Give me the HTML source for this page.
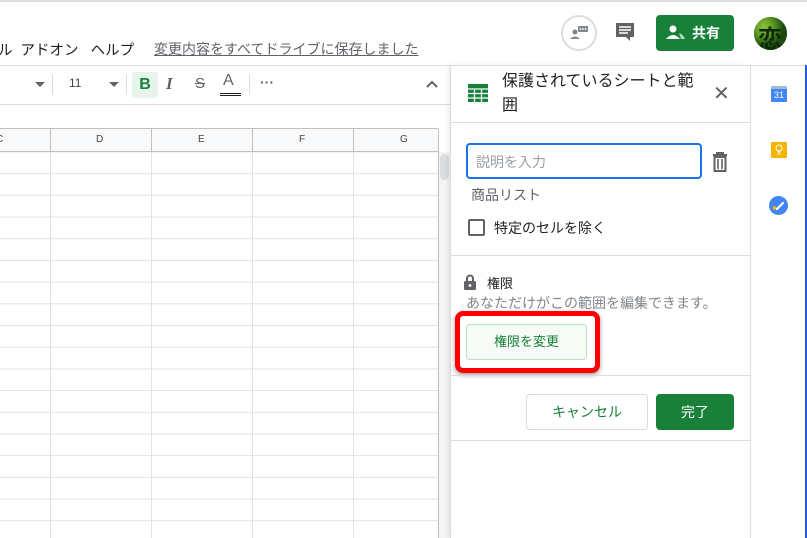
<!DOCTYPE html><html><head><meta charset="utf-8"><style>
*{box-sizing:border-box;margin:0;padding:0}
body{width:807px;height:538px;overflow:hidden;background:#fff;position:relative;font-family:"Liberation Sans","Noto Sans CJK JP",sans-serif;color:#202124}
.a{position:absolute}
</style></head><body>
<div class="a" style="left:0;top:0;width:807px;height:2px;background:#dadce0"></div>
<div class="a" style="left:-2px;top:39px;font-size:14.5px;color:#202124;white-space:nowrap">ル&nbsp;&nbsp;アドオン&nbsp;&nbsp;&nbsp;ヘルプ</div>
<div class="a" style="left:154px;top:39px;font-size:14px;color:#5f6368;text-decoration:underline">変更内容をすべてドライブに保存しました</div>
<!-- top right -->
<div class="a" style="left:561px;top:15px;width:36px;height:36px;border:2px solid #dadce0;border-radius:50%"></div>
<svg class="a" style="left:568px;top:24px" width="22" height="16"><circle cx="7" cy="8" r="2.5" fill="#80868b"/><path d="M2 15q5-5 10 0z" fill="#80868b"/><rect x="10" y="2" width="10" height="6" rx="1" fill="#80868b"/><circle cx="12.5" cy="5" r=".9" fill="#fff"/><circle cx="15" cy="5" r=".9" fill="#fff"/><circle cx="17.5" cy="5" r=".9" fill="#fff"/></svg>
<svg class="a" style="left:615px;top:22px" width="20" height="22"><path d="M1 1h18v14h-4v4l-4-4H1z" fill="#5f6368"/><path d="M4 5h12M4 8h12M4 11h9" stroke="#fff" stroke-width="1.6"/></svg>
<div class="a" style="left:656px;top:15px;width:78px;height:36px;background:#188038;border-radius:4px;color:#fff;font-size:14px;font-weight:bold;line-height:36px;padding-left:36px">共有</div>
<svg class="a" style="left:666px;top:24px" width="20" height="16"><circle cx="7" cy="5" r="3.5" fill="#fff"/><path d="M0 15q7-8 14 0z" fill="#fff"/><path d="M13 9q4 1 6 6h-4z" fill="#a8dab5"/></svg>
<div class="a" style="left:754px;top:17px;width:33px;height:33px;border-radius:50%;background:#1e5a1a;overflow:hidden"><div style="position:absolute;left:0;top:0;width:33px;height:33px;background:radial-gradient(circle at 30% 30%,#8fc13a 0,#5a9a20 30%,#1e4a12 60%)"></div><div style="position:absolute;left:4px;top:2px;font-size:24px;color:#0d2a0a;font-weight:bold">恋</div></div>
<!-- toolbar -->
<div class="a" style="left:0;top:65px;width:450px;height:1px;background:#dadce0"></div>
<div class="a" style="left:0;top:104px;width:450px;height:1px;background:#dadce0"></div>
<div class="a" style="left:35px;top:82px;border:5px solid transparent;border-top-color:#5f6368;border-bottom:0"></div>
<div class="a" style="left:52px;top:75px;width:1px;height:20px;background:#dadce0"></div>
<div class="a" style="left:69px;top:76px;font-size:12px;color:#444">11</div>
<div class="a" style="left:109px;top:82px;border:5px solid transparent;border-top-color:#5f6368;border-bottom:0"></div>
<div class="a" style="left:126px;top:75px;width:1px;height:20px;background:#dadce0"></div>
<div class="a" style="left:132px;top:72px;width:26px;height:26px;background:#e6f4ea;border-radius:3px;color:#188038;font-weight:bold;font-size:16px;text-align:center;line-height:26px">B</div>
<div class="a" style="left:166px;top:74px;font-size:17px;font-style:italic;font-weight:bold;color:#5f6368;font-family:'Liberation Serif',serif">I</div>
<div class="a" style="left:195px;top:75px;font-size:15px;color:#5f6368;text-decoration:line-through">S</div>
<div class="a" style="left:223px;top:72px;font-size:16px;color:#5f6368">A</div>
<div class="a" style="left:220px;top:93px;width:21px;height:3px;border-top:1px solid #222;border-bottom:1px solid #222"></div>
<div class="a" style="left:249px;top:75px;width:1px;height:20px;background:#dadce0"></div>
<div class="a" style="left:260px;top:74px;font-size:14px;color:#5f6368;font-weight:bold">···</div>
<svg class="a" style="left:426px;top:80px" width="12" height="8"><path d="M1 7l5-5 5 5" stroke="#5f6368" stroke-width="2" fill="none"/></svg>
<!-- grid -->
<div class="a" style="left:0;top:128px;width:438px;height:24px;background:#f8f9fa;border-top:1px solid #c0c0c0;border-bottom:1px solid #c0c0c0"></div>
<div class="a" style="left:0;top:152px;width:438px;height:386px;background-image:linear-gradient(#e2e2e2 1px,transparent 1px);background-size:100% 21.7px;background-position:0 -0.5px"></div>
<div class="a" style="left:50px;top:129px;width:1px;height:409px;background:#e2e2e2"></div>
<div class="a" style="left:151px;top:129px;width:1px;height:409px;background:#e2e2e2"></div>
<div class="a" style="left:252px;top:129px;width:1px;height:409px;background:#e2e2e2"></div>
<div class="a" style="left:353px;top:129px;width:1px;height:409px;background:#e2e2e2"></div>
<div class="a" style="left:438px;top:129px;width:1px;height:409px;background:#c0c0c0"></div>
<div class="a" style="left:50px;top:129px;width:1px;height:23px;background:#c0c0c0"></div>
<div class="a" style="left:151px;top:129px;width:1px;height:23px;background:#c0c0c0"></div>
<div class="a" style="left:252px;top:129px;width:1px;height:23px;background:#c0c0c0"></div>
<div class="a" style="left:353px;top:129px;width:1px;height:23px;background:#c0c0c0"></div>
<div class="a" style="left:-4px;top:134px;font-size:10px;color:#444">C</div>
<div class="a" style="left:96px;top:134px;font-size:10px;color:#444">D</div>
<div class="a" style="left:198px;top:134px;font-size:10px;color:#444">E</div>
<div class="a" style="left:299px;top:134px;font-size:10px;color:#444">F</div>
<div class="a" style="left:400px;top:134px;font-size:10px;color:#444">G</div>
<div class="a" style="left:439px;top:152px;width:11px;height:386px;background:#f4f4f4"></div>
<div class="a" style="left:440px;top:154px;width:9px;height:26px;background:#dadce0;border-radius:5px"></div>
<!-- panel -->
<div class="a" style="left:450px;top:65px;width:300px;height:473px;background:#fff;border-left:1px solid #dadce0;box-shadow:-2px 0 4px rgba(0,0,0,.08)"></div>
<div class="a" style="left:450px;top:65px;width:357px;height:1px;background:#dadce0"></div>
<svg class="a" style="left:468px;top:84px" width="20" height="18"><rect x="0" y="0" width="20" height="18" fill="#188038"/><path d="M0 5h20M0 9.5h20M0 14h20M6.5 5v13M13.5 5v13" stroke="#fff" stroke-width="1.3"/></svg>
<div class="a" style="left:502px;top:70px;width:200px;font-size:16px;line-height:24px;color:#202124">保護されているシートと範囲</div>
<div class="a" style="left:713px;top:82px;font-size:20px;color:#5f6368;line-height:24px">✕</div>
<div class="a" style="left:450px;top:122px;width:300px;height:1px;background:#dadce0"></div>
<div class="a" style="left:466px;top:143px;width:236px;height:36px;border:2px solid #1a73e8;border-radius:4px;font-size:14px;color:#9aa0a6;padding:7px 8px">説明を入力</div>
<svg class="a" style="left:712px;top:152px" width="16" height="20"><path d="M1 3h14M5 3V1h6v2" stroke="#5f6368" stroke-width="2" fill="none"/><path d="M2.5 5h11v14h-11z" stroke="#5f6368" stroke-width="2" fill="none"/><path d="M6 7v10M10 7v10" stroke="#5f6368" stroke-width="1.6"/></svg>
<div class="a" style="left:471px;top:185px;font-size:14px;color:#5f6368">商品リスト</div>
<div class="a" style="left:468px;top:219px;width:17px;height:17px;border:2px solid #5f6368;border-radius:2px"></div>
<div class="a" style="left:494px;top:218px;font-size:14px;color:#202124">特定のセルを除く</div>
<div class="a" style="left:450px;top:255px;width:300px;height:1px;background:#dadce0"></div>
<svg class="a" style="left:464px;top:274px" width="12" height="16"><path d="M3 7V4.5a3 3 0 0 1 6 0V7" stroke="#5f6368" stroke-width="2" fill="none"/><rect x="0" y="7" width="12" height="9" rx="1.5" fill="#5f6368"/><circle cx="6" cy="11.5" r="1.4" fill="#fff"/></svg>
<div class="a" style="left:487px;top:273px;font-size:13px;color:#202124">権限</div>
<div class="a" style="left:466px;top:293px;font-size:14px;color:#80868b;white-space:nowrap">あなただけがこの範囲を編集できます。</div>
<div class="a" style="left:455px;top:311px;width:145px;height:62px;border:5px solid #f00;border-radius:8px;box-shadow:0 2px 5px rgba(0,0,0,.4)"></div>
<div class="a" style="left:466px;top:324px;width:121px;height:36px;background:#f6fbf7;border:1px solid #b7dfc1;border-radius:4px;font-size:13px;color:#188038;text-align:center;line-height:34px">権限を変更</div>
<div class="a" style="left:450px;top:375px;width:300px;height:1px;background:#dadce0"></div>
<div class="a" style="left:526px;top:394px;width:122px;height:36px;border:1px solid #dadce0;border-radius:4px;font-size:14px;color:#188038;text-align:center;line-height:34px">キャンセル</div>
<div class="a" style="left:656px;top:394px;width:78px;height:36px;background:#188038;border-radius:4px;font-size:14px;color:#fff;text-align:center;line-height:36px">完了</div>
<div class="a" style="left:450px;top:440px;width:300px;height:1px;background:#dadce0"></div>
<!-- side -->
<div class="a" style="left:750px;top:65px;width:1px;height:473px;background:#dadce0"></div>
<div class="a" style="left:805px;top:65px;width:2px;height:473px;background:#1a5fd6"></div>
<div class="a" style="left:771px;top:86px;width:16px;height:16px;background:#4285f4;border-radius:1px;border-top:3px solid #a4b8d8;color:#fff;font-size:9px;text-align:center;line-height:13px">31</div>
<div class="a" style="left:771px;top:142px;width:16px;height:16px;background:#f4b400;border-radius:1px"></div>
<svg class="a" style="left:774px;top:144px" width="10" height="12"><circle cx="5" cy="4" r="3" stroke="#fff" stroke-width="1" fill="none"/><path d="M3.5 8h3M3.5 10h3" stroke="#fff"/></svg>
<div class="a" style="left:769px;top:196px;width:19px;height:19px;background:#4285f4;border-radius:50%"></div>
<svg class="a" style="left:769px;top:196px" width="19" height="19"><circle cx="5.5" cy="12" r="1.8" fill="#fbbc04"/><path d="M8 13l6-6" stroke="#fff" stroke-width="2.2" stroke-linecap="round"/></svg>
</body></html>
